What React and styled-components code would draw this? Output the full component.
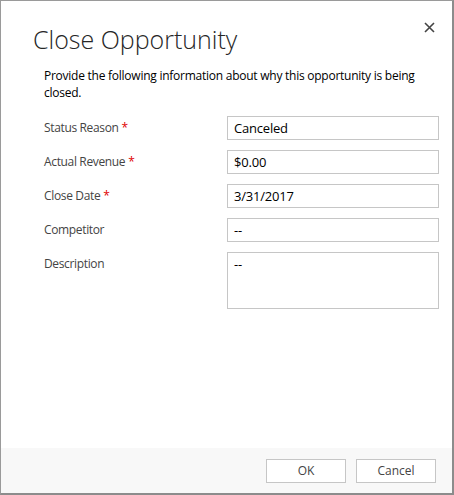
import React from "react";
import styled, { createGlobalStyle } from "styled-components";

const GlobalStyle = createGlobalStyle`
  html, body {
    margin: 0;
    padding: 0;
    background: #ffffff;
  }
  body {
    font-family: "Segoe UI", "Open Sans", "Noto Sans", sans-serif;
  }
`;

const fields = [
  { label: "Status Reason", value: "Canceled", required: true },
  { label: "Actual Revenue", value: "$0.00", required: true },
  { label: "Close Date", value: "3/31/2017", required: true },
  { label: "Competitor", value: "--" },
  { label: "Description", value: "--", tall: true },
];

export default function App() {
  return (
    <>
      <GlobalStyle />
      <Dialog>
        <Body>
          <CloseButton aria-label="Close">
            <svg width="11" height="11" viewBox="0 0 11 11">
              <path d="M1 1L10 10M10 1L1 10" stroke="#444" strokeWidth="1.6" />
            </svg>
          </CloseButton>
          <Title>Close Opportunity</Title>
          <Intro>
            Provide the following information about why this opportunity is being
            closed.
          </Intro>
          <Form>
            {fields.map((f) => (
              <Row key={f.label} $tall={f.tall}>
                <Label>
                  {f.label}
                  {f.required && <Required>*</Required>}
                </Label>
                <Field $tall={f.tall}>{f.value}</Field>
              </Row>
            ))}
          </Form>
        </Body>
        <Footer>
          <Button>OK</Button>
          <Button>Cancel</Button>
        </Footer>
      </Dialog>
    </>
  );
}

const Dialog = styled.div`
  box-sizing: border-box;
  width: 454px;
  height: 495px;
  display: flex;
  flex-direction: column;
  background: #ffffff;
  border-top: 1px solid #9a9a9a;
  border-left: 1px solid #9a9a9a;
  border-right: 2px solid #8c8c8c;
  border-bottom: 2px solid #8c8c8c;
`;

const Body = styled.div`
  position: relative;
  flex: 1;
  padding: 18px 13px 0 32px;
`;

const CloseButton = styled.button`
  position: absolute;
  top: 19px;
  right: 15px;
  width: 15px;
  height: 15px;
  padding: 0;
  border: none;
  background: none;
  display: flex;
  align-items: center;
  justify-content: center;
`;

const Title = styled.h1`
  margin: 0;
  font-size: 25px;
  font-weight: 300;
  color: #262626;
  line-height: 40px;
`;

const Intro = styled.p`
  margin: 8px 0 0 11px;
  font-size: 12px;
  letter-spacing: -0.25px;
  line-height: 17px;
  color: #000000;
`;

const Form = styled.div`
  margin: 15px 0 0 11px;
  display: flex;
  flex-direction: column;
  gap: 10px;
`;

const Row = styled.div`
  display: grid;
  grid-template-columns: 183px 212px;
  align-items: ${(p) => (p.$tall ? "start" : "center")};
`;

const Label = styled.div`
  font-size: 12px;
  letter-spacing: -0.35px;
  color: #444444;
  line-height: 24px;
`;

const Required = styled.span`
  color: #e00000;
  margin-left: 3px;
`;

const Field = styled.div`
  box-sizing: border-box;
  height: ${(p) => (p.$tall ? "57px" : "24px")};
  border: 1px solid #c6c6c6;
  padding: 0 6px;
  font-size: 13px;
  letter-spacing: -0.2px;
  line-height: 22px;
  color: #000000;
`;

const Footer = styled.div`
  height: 45px;
  background: #f8f8f8;
  display: flex;
  justify-content: flex-end;
  align-items: center;
  gap: 10px;
  padding-right: 16px;
`;

const Button = styled.button`
  box-sizing: border-box;
  width: 80px;
  height: 24px;
  border: 1px solid #c6c6c6;
  background: #ffffff;
  font-family: inherit;
  font-size: 12px;
  color: #444444;
  padding: 0;
`;
